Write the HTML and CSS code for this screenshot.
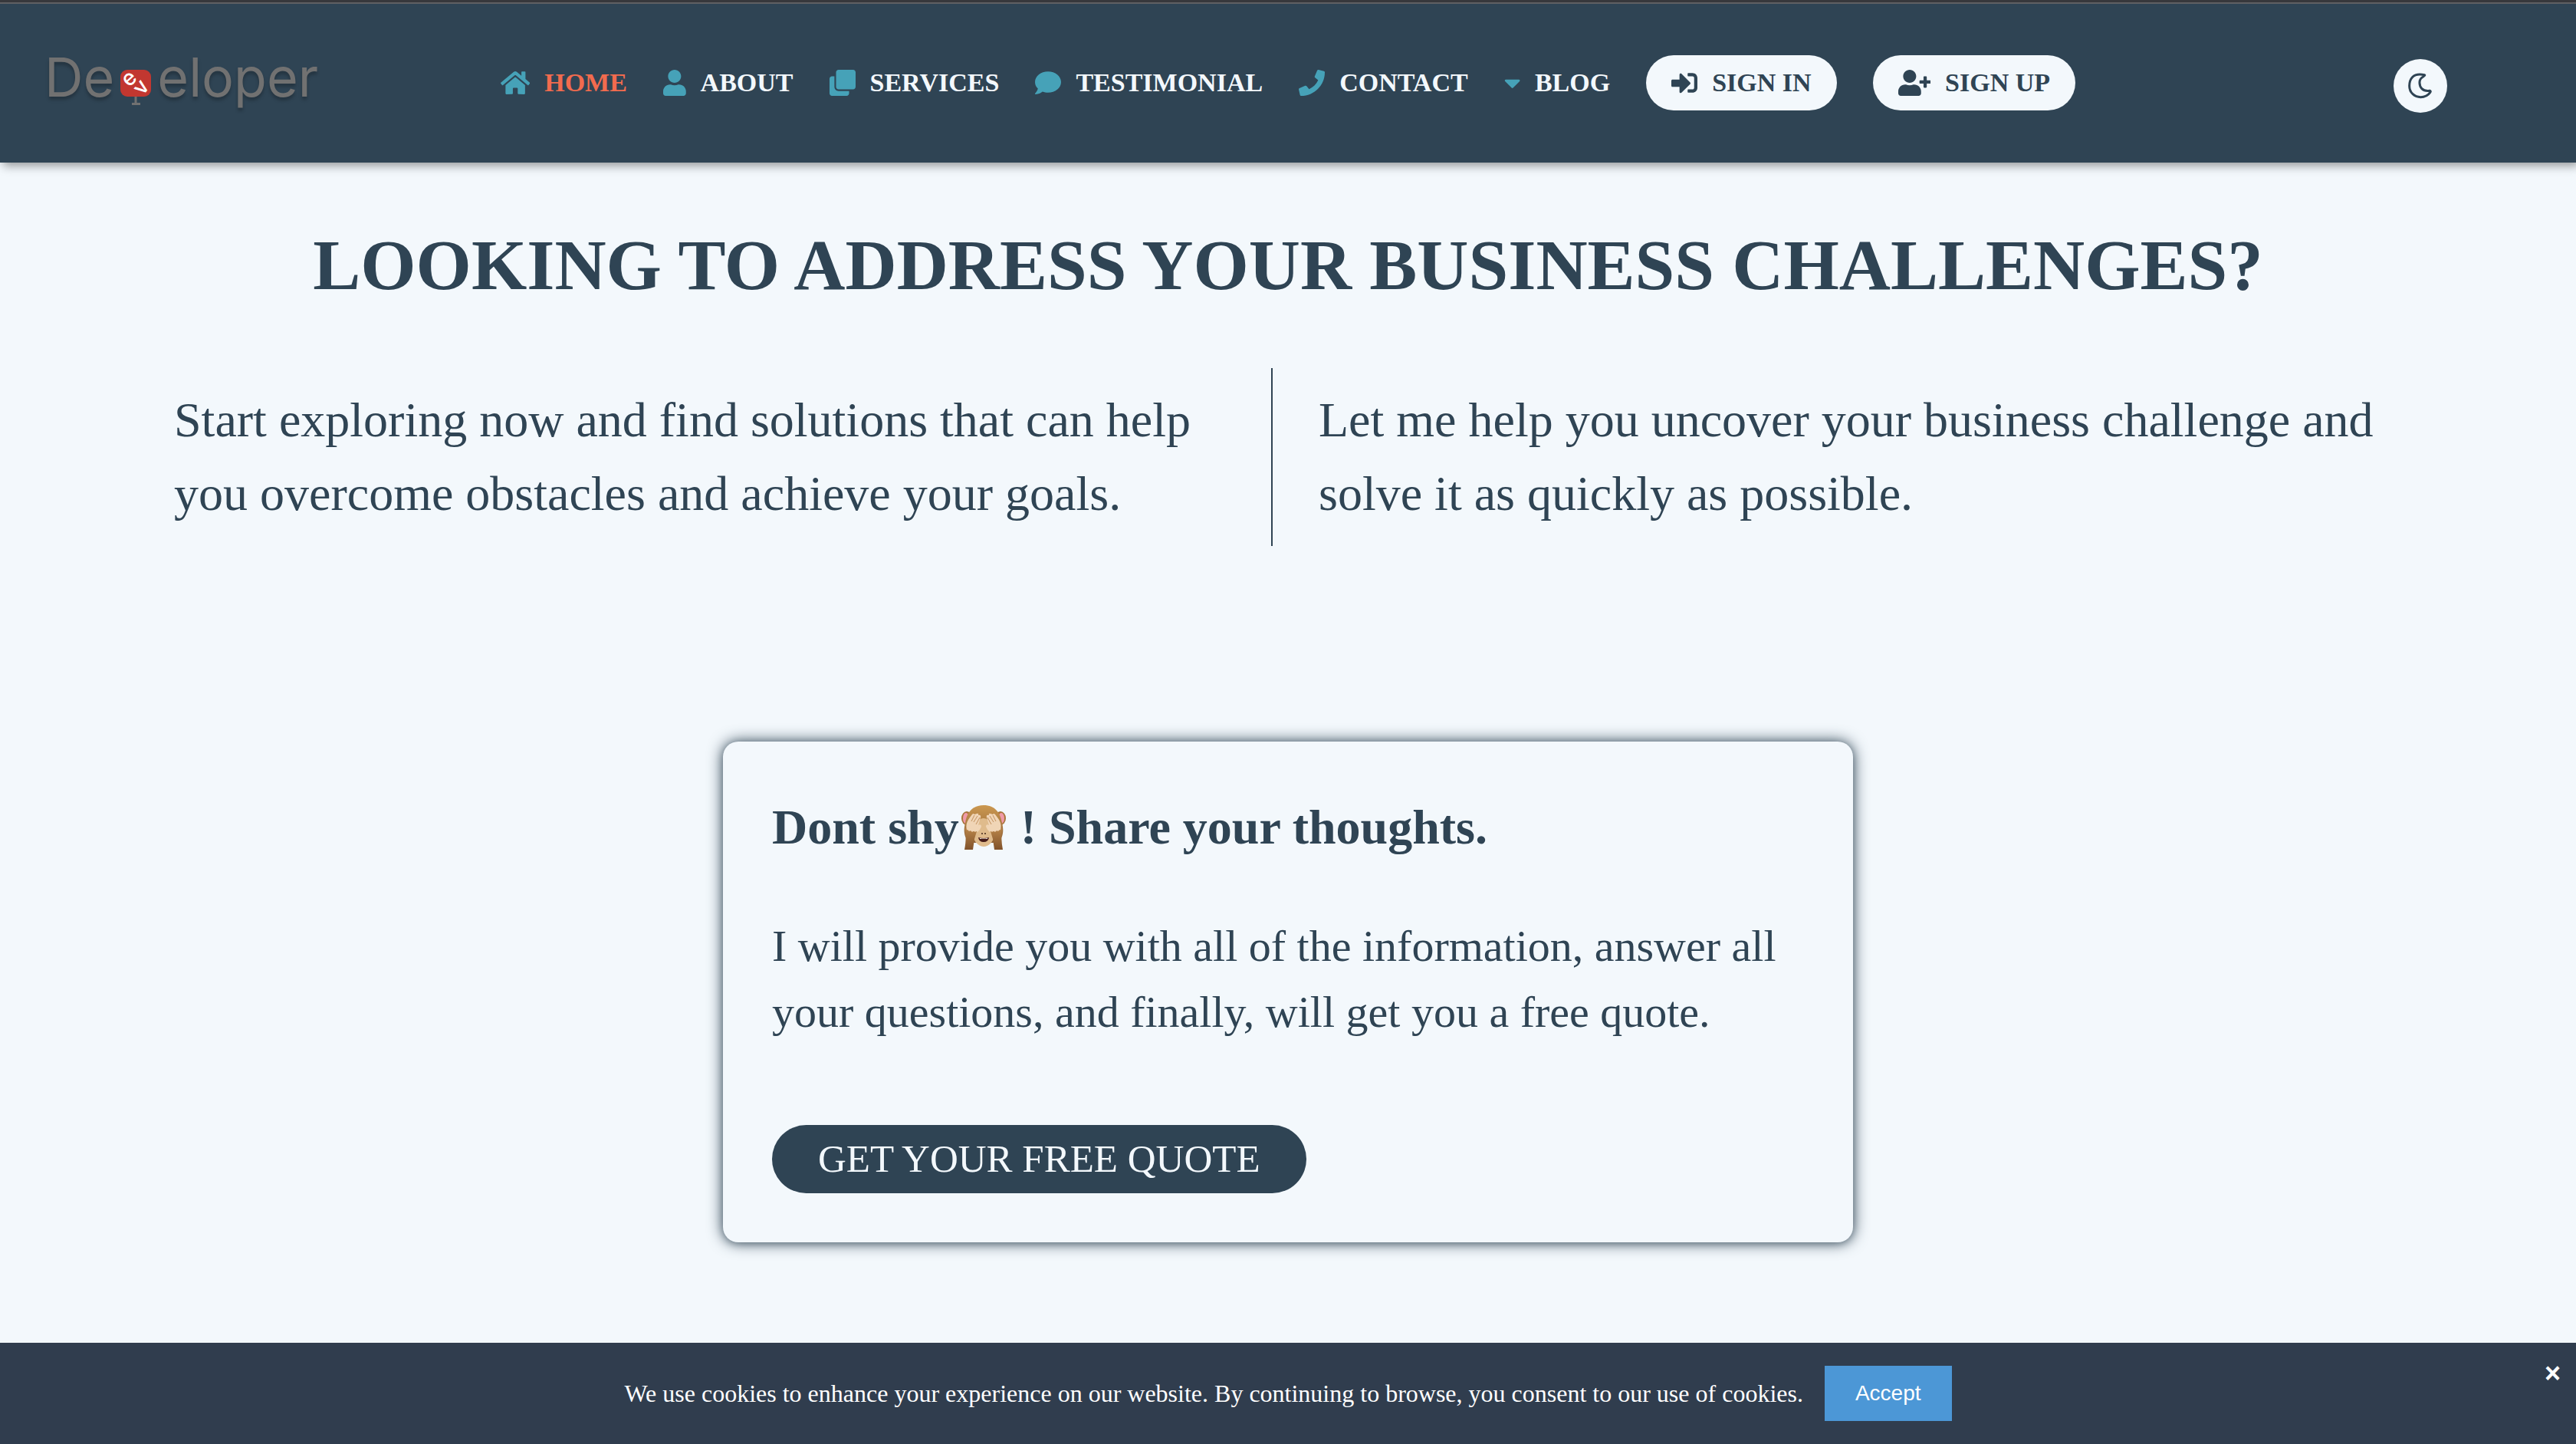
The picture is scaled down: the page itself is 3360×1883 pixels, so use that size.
FILE: index.html
```html
<!DOCTYPE html>
<html lang="en">
<head>
<meta charset="utf-8">
<title>Developer</title>
<link rel="stylesheet" href="styles.css">
</head>
<body>
<header class="site-header">
  <a class="logo" href="#" aria-label="Developer">
    <span>De</span>
    <svg class="logo-mark" viewBox="0 0 40 35" aria-hidden="true">
      <path d="M20 35V44M15 44.500H26" stroke="#717171" stroke-width="3" fill="none"/>
      <rect width="40" height="35" rx="9" fill="#c23730"/>
      <text class="mark-letter" transform="translate(17 18) rotate(-42)" text-anchor="middle">e</text>
      <text class="mark-letter" transform="translate(34 28) rotate(-53)" text-anchor="middle">v</text>
    </svg>
    <span>eloper</span>
  </a>
  <nav class="nav">
    <a class="nav-link active" href="#"><svg class="icon" viewBox="0 0 576 512"><path d="M280.37 148.26L96 300.11V464a16 16 0 0 0 16 16l112.06-.29a16 16 0 0 0 15.92-16V368a16 16 0 0 1 16-16h64a16 16 0 0 1 16 16v95.64a16 16 0 0 0 16 16.05L464 480a16 16 0 0 0 16-16V300L295.67 148.26a12.19 12.19 0 0 0-15.3 0zM571.6 251.47L488 182.56V44.05a12 12 0 0 0-12-12h-56a12 12 0 0 0-12 12v72.61L318.47 43a48 48 0 0 0-61 0L4.34 251.47a12 12 0 0 0-1.6 16.9l25.5 31A12 12 0 0 0 45.15 301l235.22-193.74a12.19 12.19 0 0 1 15.3 0L530.9 301a12 12 0 0 0 16.9-1.6l25.5-31a12 12 0 0 0-1.7-16.93z"/></svg>HOME</a>
    <a class="nav-link" href="#"><svg class="icon" viewBox="0 0 448 512"><path d="M224 256c70.7 0 128-57.3 128-128S294.7 0 224 0 96 57.3 96 128s57.3 128 128 128zm89.6 32h-16.7c-22.2 10.2-46.9 16-72.9 16s-50.6-5.8-72.9-16h-16.7C60.2 288 0 348.2 0 422.4V464c0 26.500 21.500 48 48 48h352c26.500 0 48-21.500 48-48v-41.6c0-74.2-60.2-134.4-134.4-134.4z"/></svg>ABOUT</a>
    <a class="nav-link" href="#"><svg class="icon" viewBox="0 0 512 512"><path d="M464 0c26.51 0 48 21.49 48 48v288c0 26.51-21.49 48-48 48H176c-26.51 0-48-21.49-48-48V48c0-26.51 21.49-48 48-48h288M176 416c-44.112 0-80-35.888-80-80V128H48c-26.51 0-48 21.49-48 48v288c0 26.51 21.49 48 48 48h288c26.51 0 48-21.49 48-48v-48H176z"/></svg>SERVICES</a>
    <a class="nav-link" href="#"><svg class="icon" viewBox="0 0 512 512"><path d="M256 32C114.6 32 0 125.1 0 240c0 49.6 21.4 95 57 130.7C44.5 421.1 2.7 466 2.2 466.5c-2.2 2.3-2.8 5.7-1.5 8.7S4.8 480 8 480c66.3 0 116-31.8 140.6-51.4 32.7 12.3 69 19.4 107.4 19.4 141.4 0 256-93.1 256-208S397.4 32 256 32z"/></svg>TESTIMONIAL</a>
    <a class="nav-link" href="#"><svg class="icon" viewBox="0 0 512 512"><path d="M493.4 24.6l-104-24c-11.3-2.6-22.9 3.3-27.5 13.9l-48 112c-4.2 9.8-1.4 21.3 6.9 28l60.6 49.6c-36 76.7-98.9 140.5-177.2 177.2l-49.6-60.6c-6.8-8.3-18.2-11.1-28-6.9l-112 48C3.9 366.5-2 378.1.6 389.4l24 104C27.1 504.2 36.7 512 48 512c256.1 0 464-207.5 464-464 0-11.2-7.7-20.9-18.6-23.4z"/></svg>CONTACT</a>
    <a class="nav-link" href="#"><svg class="icon" viewBox="0 0 320 512"><path d="M31.3 192h257.3c17.8 0 26.7 21.5 14.1 34.1L174.1 354.8c-7.8 7.8-20.5 7.8-28.3 0L17.2 226.1C4.6 213.5 13.5 192 31.3 192z"/></svg>BLOG</a>
    <a class="nav-link pill" href="#"><svg class="icon" viewBox="0 0 512 512"><path d="M416 448h-84c-6.6 0-12-5.4-12-12v-40c0-6.6 5.4-12 12-12h84c17.7 0 32-14.3 32-32V160c0-17.7-14.3-32-32-32h-84c-6.6 0-12-5.4-12-12V76c0-6.6 5.4-12 12-12h84c53 0 96 43 96 96v192c0 53-43 96-96 96zm-47-201L201 79c-15-15-41-4.5-41 17v96H24c-13.3 0-24 10.7-24 24v96c0 13.3 10.7 24 24 24h136v96c0 21.5 26 32 41 17l168-168c9.3-9.4 9.3-24.6 0-34z"/></svg>SIGN IN</a>
    <a class="nav-link pill" href="#"><svg class="icon" viewBox="0 0 640 512"><path d="M624 208h-64v-64c0-8.8-7.2-16-16-16h-32c-8.8 0-16 7.2-16 16v64h-64c-8.8 0-16 7.2-16 16v32c0 8.8 7.2 16 16 16h64v64c0 8.8 7.2 16 16 16h32c8.8 0 16-7.2 16-16v-64h64c8.8 0 16-7.2 16-16v-32c0-8.8-7.2-16-16-16zm-400 48c70.7 0 128-57.3 128-128S294.7 0 224 0 96 57.3 96 128s57.3 128 128 128zm89.6 32h-16.7c-22.2 10.2-46.9 16-72.9 16s-50.6-5.8-72.9-16h-16.7C60.2 288 0 348.2 0 422.4V464c0 26.5 21.5 48 48 48h352c26.5 0 48-21.5 48-48v-41.6c0-74.2-60.2-134.4-134.4-134.4z"/></svg>SIGN UP</a>
  </nav>
  <button class="theme-toggle" aria-label="Switch to dark mode">
    <svg class="moon" viewBox="0 0 96 102"><path d="M64 8C16-2 5 28 5 51c0 27 21 44 44 44 17 0 30-8 37-18 4-5 1-8-4-7-25 3-38-14-37-33 0-11 5-17 14-22 5-4 8-6 5-7z"/></svg>
  </button>
</header>

<main class="page">
  <h1 class="headline">LOOKING TO ADDRESS YOUR BUSINESS CHALLENGES?</h1>
  <div class="intro">
    <p class="intro-text">Start exploring now and find solutions that can help you overcome obstacles and achieve your goals.</p>
    <p class="intro-text ruled">Let me help you uncover your business challenge and solve it as quickly as possible.</p>
  </div>
  <section class="card">
    <h2 class="card-title">Dont shy<svg class="monkey" viewBox="0 0 60 60" role="img" aria-label="see-no-evil monkey">
      <defs>
        <linearGradient id="fur" x1="0" y1="0" x2="0" y2="1"><stop offset="0" stop-color="#cb9850"/><stop offset="1" stop-color="#8f6137"/></linearGradient>
        <linearGradient id="arm" x1="0" y1="0" x2="0" y2="1"><stop offset="0" stop-color="#b98549"/><stop offset="1" stop-color="#80522b"/></linearGradient>
        <g id="side">
          <ellipse cx="8" cy="18" rx="7" ry="9" fill="#a87439"/>
          <ellipse cx="7" cy="18" rx="4" ry="7" fill="#f09aa8"/>
        </g>
        <g id="hand">
          <path d="M6 31l15 4-3 10-2 14H5c2-10 2-18 1-28z" fill="url(#arm)"/>
          <path d="M8 33C6 26 9 21 12 17L15 13q2-2 3 0L21 12q3-1 2 2 4-1 3 3L23 27q4-2 4 2-2 5-5 7-1-2-3 0-2-2-4 0-2-3-4-1-1-2-3-2z" fill="#f0d5b6"/>
          <path d="M18 14l-4 8M22 15l-5 8M25 17l-5 9" stroke="#c2915f" stroke-width="1" fill="none"/>
        </g>
      </defs>
      <use href="#side"/><use href="#side" transform="translate(60) scale(-1 1)"/>
      <path d="M30 1C15 1 8 11 6 24c-3 12-1 21 7 26h34c8-5 10-14 7-26C52 11 45 1 30 1z" fill="url(#fur)"/>
      <path d="M30 18c-8 0-13 12-14 22 1 9 8 15 14 15s13-6 14-15c-1-10-6-22-14-22z" fill="#dfbb8c"/>
      <circle cx="28" cy="38" r="1" fill="#43281b"/><circle cx="32" cy="38" r="1" fill="#43281b"/>
      <path d="M23 43q7 2 14 0-1 6-7 6t-7-6z" fill="#451b17"/><path d="M25 44q5 1 10 0v1H25z" fill="#fff"/>
      <use href="#hand"/><use href="#hand" transform="translate(60) scale(-1 1)"/>
    </svg> ! Share your thoughts.</h2>
    <p class="card-text">I will provide you with all of the information, answer all your questions, and finally, will get you a free quote.</p>
    <a class="quote-button" href="#">GET YOUR FREE QUOTE</a>
  </section>
</main>

<aside class="cookie-bar" aria-label="Cookie notice">
  <p class="cookie-text">We use cookies to enhance your experience on our website. By continuing to browse, you consent to our use of cookies.</p>
  <button class="accept">Accept</button>
  <button class="close" aria-label="Close">×</button>
</aside>
</body>
</html>
```
FILE: styles.css
```css
* {
  box-sizing: border-box;
}

body {
  margin: 0;
  min-height: 100vh;
  display: flex;
  flex-direction: column;
  background: #f3f8fc;
  color: #2f4454;
  font-family: "Liberation Serif", "Times New Roman", serif;
}

h1,
h2,
p {
  margin: 0;
}

.site-header {
  display: grid;
  grid-template-columns: 1fr auto 1fr;
  align-items: center;
  padding: 57px 58px 53px;
  background: linear-gradient(#37383c 3px, #5f6063 3px, #5f6063 5px, #2f4454 5px);
  box-shadow: 4px 4px 12px rgba(0, 0, 0, 0.4);
}

.logo {
  display: flex;
  align-items: baseline;
  margin-bottom: 14px;
  color: #717171;
  font: 400 70px/88px Inter, sans-serif;
  text-decoration: none;
  text-shadow: 0 4px 4px rgba(0, 0, 0, 0.25);
}

.logo-mark {
  width: 40px;
  height: 35px;
  margin: 0 8px;
  overflow: visible;
}

.mark-letter {
  font: 500 28px Inter, sans-serif;
  fill: #fff;
  text-shadow: none;
}

.nav {
  display: flex;
  align-items: center;
  gap: 47px;
}

.nav-link {
  display: flex;
  align-items: center;
  gap: 19px;
  color: #f3f8fc;
  font-size: 34px;
  font-weight: 700;
  line-height: 40px;
  text-decoration: none;
  white-space: nowrap;
}

.nav-link.active {
  color: #f26b4e;
}

.icon {
  height: 34px;
  fill: #46a2b8;
}

.pill {
  padding: 16px 33px;
  border-radius: 36px;
  background: #f3f8fc;
  color: #2f4454;
}

.pill .icon {
  fill: #2f4454;
}

.theme-toggle {
  display: grid;
  place-items: center;
  justify-self: end;
  width: 70px;
  height: 70px;
  margin: 8px 110px 0 0;
  padding: 0;
  border: 0;
  border-radius: 50%;
  background: #f3f8fc;
}

.moon {
  width: 32px;
  height: 34px;
  fill: none;
  stroke: #2f4454;
  stroke-width: 9px;
  stroke-linejoin: round;
}

.page {
  flex: 1;
  padding: 78px 227px 120px;
}

.headline {
  font-size: 93px;
  line-height: 112px;
  text-align: center;
}

.intro {
  display: grid;
  grid-template-columns: 1431fr 1475fr;
  margin-top: 78px;
}

.intro-text {
  padding: 20px 60px 20px 0;
  font-size: 64px;
  line-height: 96px;
}

.ruled {
  padding: 20px 0 20px 60px;
  border-left: 2px solid #2f4454;
}

.card {
  width: 1474px;
  max-width: 100%;
  margin: 255px auto 0;
  padding: 64px;
  border-radius: 20px;
  background: #f3f8fc;
  box-shadow: 0 0 20px #2f4454, 0 2px 10px rgba(47, 68, 84, 0.3);
}

.card-title {
  font-size: 64px;
  line-height: 96px;
}

.monkey {
  width: 60px;
  height: 60px;
  margin: 0 2px;
  vertical-align: -9px;
}

.card-text {
  margin-top: 64px;
  font-size: 58px;
  line-height: 86px;
}

.quote-button {
  display: inline-block;
  margin-top: 104px;
  padding: 14px 60px 15px;
  border-radius: 45px;
  background: #2f4454;
  color: #f3f8fc;
  font-size: 51px;
  line-height: 60px;
  text-decoration: none;
}

.cookie-bar {
  position: relative;
  display: flex;
  align-items: center;
  justify-content: center;
  gap: 28px;
  padding: 30px;
  background: #303d4e;
  color: #fff;
}

.cookie-text {
  font-size: 32px;
  line-height: 40px;
}

.accept {
  height: 72px;
  padding: 0 40px;
  border: 0;
  background: #4c97d6;
  color: #fff;
  font: 28px "Liberation Sans", Arial, sans-serif;
}

.close {
  position: absolute;
  top: 20px;
  right: 20px;
  padding: 0;
  border: 0;
  background: none;
  color: #fff;
  font: 700 36px/40px "Liberation Sans", Arial, sans-serif;
}
```
